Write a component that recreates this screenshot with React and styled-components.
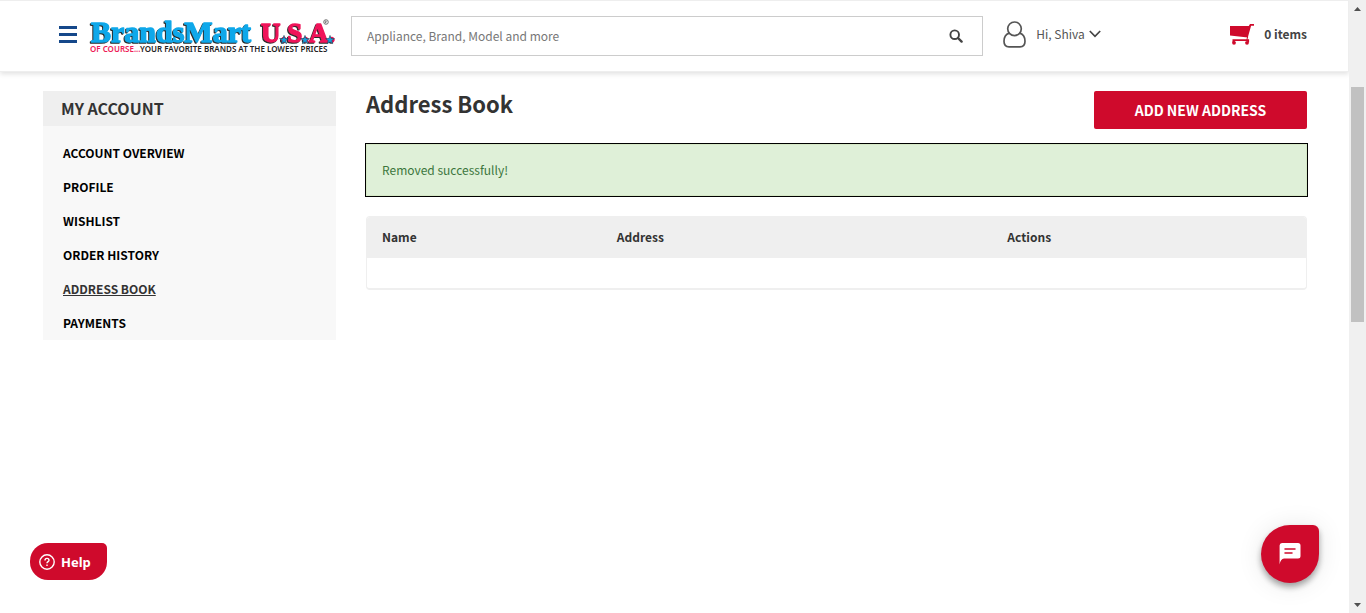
import React from "react";
import styled, { createGlobalStyle } from "styled-components";

const RED = "#cf0a2c";

const Global = createGlobalStyle`
  *, *::before, *::after { box-sizing: border-box; }
  body {
    margin: 0;
    background: #fff;
    color: #333;
    font: 13px/20px "Noto Sans CJK SC", "Noto Sans", sans-serif;
  }
  button, input { font: inherit; color: inherit; }
  button { border: 0; background: none; padding: 0; cursor: pointer; }
  a { color: inherit; text-decoration: none; }
  svg { display: block; }
`;

const Shell = styled.div`
  display: grid;
  grid-template-columns: minmax(0, 1fr) 17px;
`;

const Page = styled.div`
  min-height: 100vh;
`;

const Header = styled.header`
  display: grid;
  grid-template-columns: auto auto minmax(0, 1fr) 247px auto;
  align-items: start;
  height: 72px;
  padding: 15px 41px 0 59px;
  border: 1px solid #eee;
  border-width: 1px 1px 1px 0;
  box-shadow: 0 2px 5px rgba(0, 0, 0, 0.12);
`;

const MenuButton = styled.button`
  display: grid;
  align-content: center;
  gap: 4px;
  width: 18px;
  height: 36px;
  margin-right: 12px;
`;

const MenuBar = styled.span`
  height: 3px;
  background: #15488a;
`;

const LogoLink = styled.a`
  margin-right: 15px;
`;

const Search = styled.form`
  display: flex;
  align-items: flex-start;
  height: 40px;
  border: 1px solid #ccc;
  background: #fff;
`;

const SearchInput = styled.input`
  flex: 1;
  min-width: 0;
  height: 36px;
  padding: 0 15px;
  border: 0;
  outline: 0;
  font-size: 12px;
  background: none;
  &::placeholder { color: #777; opacity: 1; }
`;

const SearchButton = styled.button`
  display: grid;
  align-items: center;
  height: 38px;
  padding: 0 19px;
  color: #444;
`;

const Account = styled.button`
  display: flex;
  align-items: center;
  justify-self: start;
  height: 36px;
  margin-left: 20px;
  color: #555;
  font-size: 12px;
  line-height: 16px;
`;

const AccountName = styled.span`
  margin: 0 4px 0 10px;
`;

const Cart = styled.a`
  display: flex;
  align-items: center;
  gap: 10px;
  justify-self: end;
  height: 36px;
  color: #444;
  font-size: 12px;
  line-height: 16px;
  font-weight: 700;
`;

const Content = styled.main`
  display: grid;
  grid-template-columns: minmax(0, 293fr) minmax(0, 941fr);
  gap: 30px;
  align-items: start;
  padding: 19px 42px 0 43px;
`;

const Sidebar = styled.nav`
  background: #f8f8f8;
`;

const SidebarTitle = styled.h2`
  margin: 0;
  padding: 0 18px;
  background: #efefef;
  font-size: 16px;
  line-height: 35px;
  font-weight: 700;
`;

const NavList = styled.ul`
  margin: 0;
  padding: 10px 20px 0;
  list-style: none;
`;

const NavItem = styled.li`
  line-height: 34px;
`;

const NavLink = styled.a`
  color: ${(p) => (p.$active ? "#333" : "#000")};
  font-size: 12px;
  font-weight: 700;
  text-decoration: ${(p) => (p.$active ? "underline" : "none")};
`;

const TitleRow = styled.div`
  display: flex;
  justify-content: space-between;
  align-items: flex-start;
`;

const Title = styled.h1`
  margin: 0;
  font-size: 22px;
  line-height: 24px;
  font-weight: 700;
`;

const AddButton = styled.button`
  width: 213px;
  height: 38px;
  border-radius: 2px;
  background: ${RED};
  color: #fff;
  font-size: 14px;
  font-weight: 700;
`;

const Alert = styled.div`
  margin: 15px 0 20px;
  padding: 16px 15px;
  border: 1px solid #d6e9c6;
  outline: 1px solid #000;
  background: #dff0d8;
  color: #3c763d;
  font-size: 12px;
  line-height: 18px;
`;

const TableCard = styled.div`
  overflow: hidden;
  border: 1px solid #efefef;
  border-bottom-width: 2px;
  border-radius: 4px;
`;

const Table = styled.table`
  width: 100%;
  border-collapse: collapse;
  table-layout: fixed;
`;

const HeadCell = styled.th`
  width: ${(p) => p.$width};
  height: 41px;
  padding: 0 15px 2px;
  background: #efefef;
  font-size: 12px;
  font-weight: 700;
  text-align: left;
`;

const EmptyCell = styled.td`
  height: 30px;
  padding: 0;
`;

const HelpButton = styled.button`
  position: fixed;
  left: 30px;
  bottom: 33px;
  display: flex;
  align-items: center;
  gap: 6px;
  height: 37px;
  padding: 0 16px 0 9px;
  border-radius: 18px 5px 18px 18px;
  background: ${RED};
  color: #fff;
  font: 700 13px/20px "Noto Sans", sans-serif;
`;

const ChatButton = styled.button`
  position: fixed;
  right: 47px;
  bottom: 30px;
  display: grid;
  place-items: center;
  width: 58px;
  height: 58px;
  border-radius: 50% 6px 50% 50%;
  background: ${RED};
  box-shadow: 0 4px 6px rgba(0, 0, 0, 0.35), 0 2px 26px rgba(0, 0, 0, 0.1);
`;

const ScrollRail = styled.div`
  position: sticky;
  top: 0;
  display: flex;
  flex-direction: column;
  height: 100vh;
  padding: 0 2px;
  background: #f0f0f0;
`;

const RailArrow = styled.span`
  display: grid;
  place-items: center;
  height: 17px;
`;

const RailPart = styled.span`
  flex: ${(p) => p.$share} 0 0;
  background: ${(p) => (p.$thumb ? "#c1c1c1" : "transparent")};
`;

const Wordmark = styled.g`
  font-family: "Liberation Serif", serif;
  font-weight: 700;
  stroke-width: 1.4px;
  stroke-linejoin: round;
  filter: drop-shadow(-1px 1px 0 #2b2b2b);
`;

const STAR = "M0-4.6 1.1-1.5 4.4-1.4 1.8.6 2.7 3.7 0 1.9-2.7 3.7-1.8.6-4.4-1.4-1.1-1.5Z";

function Logo() {
  return (
    <svg width="247" height="40" viewBox="0 0 247 40" role="img" aria-label="BrandsMart U.S.A.">
      <Wordmark>
        <text x="2" y="26" fontSize="30" fill="#0fa8ea" stroke="#0fa8ea">BrandsMart</text>
        <text x="172" y="26" fontSize="27" fill="#f0145a" stroke="#f0145a">U.S.A.</text>
      </Wordmark>
      <g fill="#169fdd" stroke="#24404f" strokeWidth=".6">
        <path d={STAR} transform="translate(195 24)" />
        <path d={STAR} transform="translate(216 24)" />
        <path d={STAR} transform="translate(241 24)" />
      </g>
      <circle cx="237" cy="6" r="2.3" fill="none" stroke="#444" strokeWidth=".7" />
      <path d="M236.300 7.300V4.900h1q.8.6 0 1.200h-1l1.200 1.200" fill="none" stroke="#444" strokeWidth=".5" />
      <text x="1" y="36" fontFamily="Noto Sans, sans-serif" fontSize="8" fontWeight="600" fill="#222"><tspan fill="#ee1c58">OF COURSE...</tspan>YOUR FAVORITE BRANDS AT THE LOWEST PRICES</text>
    </svg>
  );
}

const links = ["ACCOUNT OVERVIEW", "PROFILE", "WISHLIST", "ORDER HISTORY", "ADDRESS BOOK", "PAYMENTS"];

export default function App() {
  return (
    <Shell>
      <Global />
      <Page>
        <Header>
          <MenuButton type="button" aria-label="Menu">
            <MenuBar />
            <MenuBar />
            <MenuBar />
          </MenuButton>
          <LogoLink href="#home">
            <Logo />
          </LogoLink>
          <Search role="search">
            <SearchInput type="text" aria-label="Search" placeholder="Appliance, Brand, Model and more" />
            <SearchButton type="button" aria-label="Search">
              <svg width="14" height="14" viewBox="0 0 14 14" fill="none" stroke="currentColor">
                <circle cx="5.700" cy="5.700" r="4.300" strokeWidth="1.900" />
                <path d="m9 9 3.600 3.600" strokeWidth="2.400" strokeLinecap="round" />
              </svg>
            </SearchButton>
          </Search>
          <Account type="button">
            <svg width="23" height="27" viewBox="0 0 23 27" fill="none" stroke="#555" strokeWidth="1.700">
              <circle cx="11.500" cy="7.800" r="6.800" />
              <path d="M6.200 12.100C2.800 13.200 1 16.500 1 20.300 1 23.700 2.800 25.900 6 25.900h11c3.200 0 5-2.200 5-5.600 0-3.800-1.800-7.100-5.200-8.200" />
            </svg>
            <AccountName>Hi, Shiva</AccountName>
            <svg width="12" height="8" viewBox="0 0 12 8" fill="none" stroke="#444" strokeWidth="1.700">
              <path d="m.8 1 5.200 5.300L11.200 1" />
            </svg>
          </Account>
          <Cart href="#cart">
            <svg width="24" height="21" viewBox="0 0 24 21" fill={RED}>
              <path d="M0 2h18.800L20 0h4v1.800h-2.900l-3.300 11.700L0 11.500Z" />
              <path d="m17.300 12.500.9.300-.7 2.500h1.600v3H17.300v-1.200H4.700v1.200H2.500v-3h14Z" />
              <circle cx="4" cy="18.800" r="1.900" />
              <circle cx="17" cy="18.800" r="1.900" />
            </svg>
            0 items
          </Cart>
        </Header>
        <Content>
          <Sidebar aria-label="My account">
            <SidebarTitle>MY ACCOUNT</SidebarTitle>
            <NavList>
              {links.map((label) => (
                <NavItem key={label}>
                  <NavLink href="#account" $active={label === "ADDRESS BOOK"}>{label}</NavLink>
                </NavItem>
              ))}
            </NavList>
          </Sidebar>
          <section>
            <TitleRow>
              <Title>Address Book</Title>
              <AddButton type="button">ADD NEW ADDRESS</AddButton>
            </TitleRow>
            <Alert role="status">Removed successfully!</Alert>
            <TableCard>
              <Table>
                <thead>
                  <tr>
                    <HeadCell $width="25%">Name</HeadCell>
                    <HeadCell $width="41.6%">Address</HeadCell>
                    <HeadCell>Actions</HeadCell>
                  </tr>
                </thead>
                <tbody>
                  <tr>
                    <EmptyCell colSpan={3} />
                  </tr>
                </tbody>
              </Table>
            </TableCard>
          </section>
        </Content>
      </Page>
      <ScrollRail aria-hidden="true">
        <RailArrow>
          <svg width="7" height="4" viewBox="0 0 7 4" fill="#505050"><path d="M0 4h7L3.500 0Z" /></svg>
        </RailArrow>
        <RailPart $share={70} />
        <RailPart $share={235} $thumb />
        <RailPart $share={274} />
        <RailArrow>
          <svg width="7" height="4" viewBox="0 0 7 4" fill="#505050"><path d="M0 0h7L3.500 4Z" /></svg>
        </RailArrow>
      </ScrollRail>
      <HelpButton type="button">
        <svg width="16" height="16" viewBox="0 0 16 16" fill="none" stroke="#fff" strokeWidth="1.400">
          <circle cx="8" cy="8" r="7.200" />
          <path d="M6 6.400c0-1.300.9-2 2-2s2 .7 2 1.800c0 1.400-2 1.500-2 3.100" />
          <path d="M8 10.500V12" />
        </svg>
        Help
      </HelpButton>
      <ChatButton type="button" aria-label="Chat">
        <svg width="22" height="22" viewBox="0 0 22 22">
          <path fill="#fff" d="M3 0h16a2.500 2.500 0 0 1 2.500 2.500V13a2.500 2.500 0 0 1-2.500 2.500H5Q1.500 16 .6 21.500V2.500A2.500 2.500 0 0 1 3 0Z" />
          <path stroke={RED} strokeWidth="1.500" strokeLinecap="round" d="M6 6h10M6 10h7" />
        </svg>
      </ChatButton>
    </Shell>
  );
}
